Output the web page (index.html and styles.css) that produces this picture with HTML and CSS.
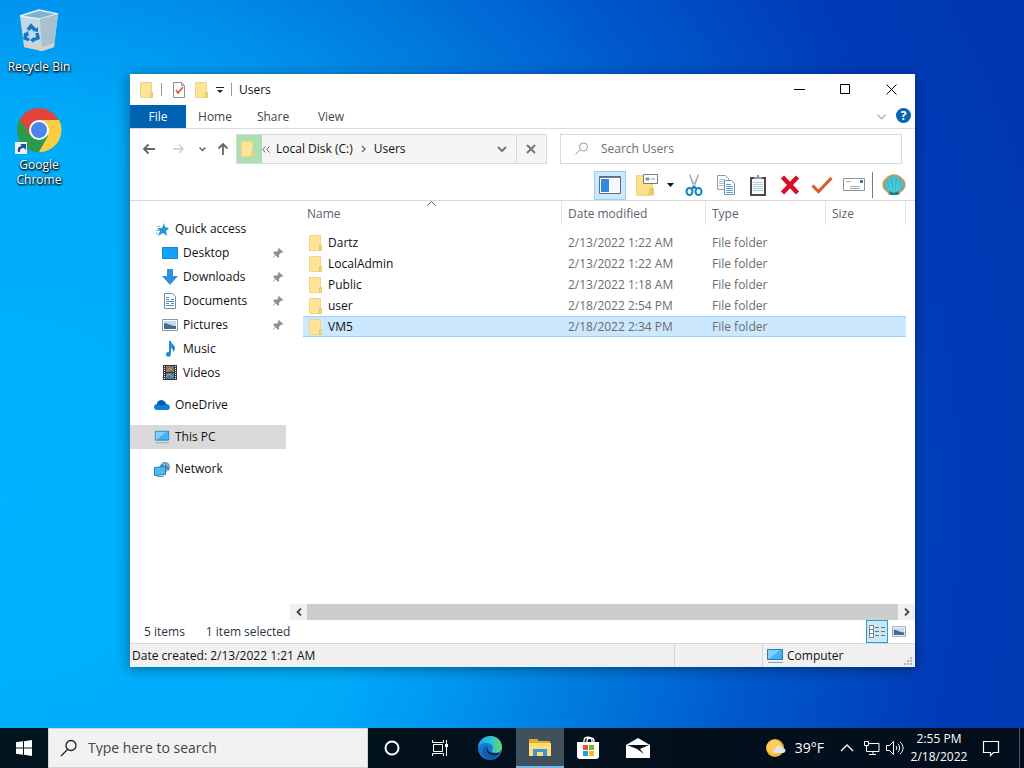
FILE: index.html
```html
<!DOCTYPE html>
<html lang="en">
<head>
  <meta charset="UTF-8">
  <meta name="viewport" content="width=device-width, initial-scale=1">
  <title>Users</title>
  <link rel="stylesheet" href="styles.css">
</head>
<body>
  <!-- Shared icons -->
  <svg class="sprite" aria-hidden="true">
    <symbol id="folder" viewBox="0 0 16 18">
      <path d="M2.500 1.500h11v15h-11z" fill="#fde496" stroke="#f0d582"/>
      <path d="M12.500 11.500h2v5h-2z" fill="#f8dc82" stroke="#e6c667"/>
    </symbol>
    <symbol id="pin" viewBox="0 0 12 12">
      <path d="M7 1l4 4-1 1-1-.3-2 2 .2 2L6 11 3.600 8.300 1 11l-.3-.3L3 7.800 1 5.500l1.200-1 2.300.2 2-2L6 1.800z" fill="#8d9299"/>
    </symbol>
    <symbol id="pc" viewBox="0 0 18 16">
      <path d="M1.500 1.500h15v10h-15z" fill="#41b4f5" stroke="#2b7cab"/>
      <path d="M2 2h12L3 11H2z" fill="#7fd0fb"/>
      <path d="M2 14.500h15" stroke="#8aa0b0"/>
    </symbol>
    <symbol id="picture" viewBox="0 0 16 12">
      <path d="M.5.5h15v11H.5z" fill="#fff" stroke="#8b969e"/>
      <path d="M2 2h12v8H2z" fill="#c3dcf2"/>
      <path d="M2 4c4 0 6 3 12 3v3H2z" fill="#456a8c"/>
    </symbol>
  </svg>

  <main class="desktop">
    <div class="shortcuts">
      <a class="shortcut" href="#recycle">
        <svg width="48" height="48" viewBox="0 0 48 48">
          <path d="M5 8l19-6 19 4-4 33-12 4-18-4z" fill="#c3d9e6"/>
          <path d="M5 8l20 3 18-5-19-4z" fill="#7fb2cf" stroke="#e3eff6" stroke-width="1.500"/>
          <path d="M25 11l18-5-4 33-12 4z" fill="#a9c0ce"/>
          <path d="M9 35l18 4 12-4v4l-12 4-18-4z" fill="#d8cfc9"/>
          <g fill="none" stroke="#1377c9" stroke-width="3.500">
            <path d="M13 22l3-4 4 4M22 25l1 5-5 2M14 32l-4-2 1-5"/>
          </g>
          <path d="M18 23l5 1 0-5zM19 29v6l-4-3zM8 27l5-4 1 5z" fill="#1377c9"/>
        </svg>
        <span>Recycle Bin</span>
      </a>
      <a class="shortcut" href="#chrome">
        <svg width="48" height="48" viewBox="0 0 48 48">
          <circle cx="24" cy="24" r="22" fill="#e0443a"/>
          <path d="M5 13a22 22 0 0 0 20 33l9-16-10-6-10 4z" fill="#2b9a4b"/>
          <path d="M24 14h20A22 22 0 0 1 24 46l9-16z" fill="#fdce45"/>
          <circle cx="24" cy="24" r="10" fill="#fff"/>
          <circle cx="24" cy="24" r="8" fill="#4a86ee"/>
          <path d="M0 36h12v12H0z" fill="#f2f2f2"/>
          <path d="M3 46c-1-4 1-6 4-6l-2-2h6v6l-2-2c-3 0-4 1-4 4z" fill="#24509c"/>
        </svg>
        <span>Google Chrome</span>
      </a>
    </div>

    <section class="window">
      <header class="titlebar">
        <svg width="16" height="18"><use href="#folder"/></svg>
        <span class="divider"></span>
        <button class="quick props" aria-label="Properties">
          <svg width="14" height="16" viewBox="0 0 14 16">
            <path d="M1.500.5h8l3 3v12h-11z" fill="#fff" stroke="#8c9196"/>
            <path d="M9.500.5v3h3" fill="none" stroke="#8c9196"/>
            <path d="M4 8l2 3 5-6" fill="none" stroke="#d9623b" stroke-width="1.800"/>
          </svg>
        </button>
        <button class="quick" aria-label="New folder"><svg width="16" height="18"><use href="#folder"/></svg></button>
        <button class="quick" aria-label="Customize toolbar">
          <svg width="8" height="8" viewBox="0 0 8 8"><path d="M0 1h8v1H0zM1 4h6L4 7z" fill="#222"/></svg>
        </button>
        <span class="divider"></span>
        <h1>Users</h1>
        <div class="controls">
          <button aria-label="Minimize"><svg width="11" height="11"><path d="M0 5.500h11" stroke="#000"/></svg></button>
          <button aria-label="Maximize"><svg width="11" height="11"><path d="M.5.5h9v9h-9z" fill="none" stroke="#000"/></svg></button>
          <button aria-label="Close"><svg width="11" height="11"><path d="M.5.5l10 10M10.500.5l-10 10" stroke="#000"/></svg></button>
        </div>
      </header>

      <nav class="tabs">
        <button class="tab file">File</button>
        <button class="tab">Home</button>
        <button class="tab">Share</button>
        <button class="tab">View</button>
        <button class="expand" aria-label="Expand ribbon">
          <svg width="9" height="6"><path d="M.5.8l4 4 4-4" fill="none" stroke="#b5b5b5" stroke-width="1.500"/></svg>
        </button>
        <button class="help" aria-label="Help">?</button>
      </nav>

      <div class="location">
        <div class="history">
          <button aria-label="Back"><svg width="14" height="12"><path d="M13 6H2M6.500 1.500L2 6l4.500 4.500" fill="none" stroke="#666" stroke-width="1.800"/></svg></button>
          <button aria-label="Forward"><svg width="12" height="12"><path d="M0 6h10M6 2l4 4-4 4" fill="none" stroke="#ccc" stroke-width="1.500"/></svg></button>
          <button class="recent" aria-label="Recent locations"><svg width="7" height="5"><path d="M.5.5l3 3 3-3" fill="none" stroke="#666" stroke-width="1.500"/></svg></button>
          <button class="up" aria-label="Up"><svg width="12" height="14"><path d="M6 13V2M1.500 6.500L6 2l4.500 4.500" fill="none" stroke="#666" stroke-width="1.800"/></svg></button>
        </div>
        <div class="address">
          <span class="progress"><svg width="16" height="18"><use href="#folder"/></svg></span>
          <button class="more" aria-label="Parent folders"><svg width="8" height="7"><path d="M3.500.5l-3 3 3 3M7.500.5l-3 3 3 3" fill="none" stroke="#666"/></svg></button>
          <button class="crumb">Local Disk (C:)</button>
          <svg width="5" height="8"><path d="M1 1l3 3-3 3" fill="none" stroke="#666" stroke-width="1.300"/></svg>
          <button class="crumb">Users</button>
          <button class="drop" aria-label="Previous locations"><svg width="10" height="7"><path d="M1 1l4 4 4-4" fill="none" stroke="#777" stroke-width="2"/></svg></button>
          <button class="stop" aria-label="Stop loading"><svg width="10" height="10"><path d="M1 1l8 8M9 1L1 9" stroke="#777" stroke-width="2"/></svg></button>
        </div>
        <label class="search">
          <svg width="14" height="14"><path d="M.5 12.500l5-5" stroke="#999"/><circle cx="8.500" cy="5" r="4" fill="none" stroke="#999"/></svg>
          <input type="text" placeholder="Search Users" aria-label="Search Users">
        </label>
      </div>

      <div class="toolbar">
        <button class="tool active" aria-label="Navigation pane">
          <svg width="22" height="18" viewBox="0 0 22 18"><path d="M.5.5h21v17H.5z" fill="#fff" stroke="#5c6d7a"/><path d="M1 1h20v1H1z" fill="#71818c"/><path d="M2 3h8v13H2z" fill="#2f89df"/><path d="M11 3h9v13h-9z" fill="#f2f8fd"/></svg>
        </button>
        <button class="tool" aria-label="Folder options">
          <svg width="24" height="22" viewBox="0 0 24 22"><path d="M1.500 1.500h16v20h-16z" fill="#fbe08a" stroke="#f0d582"/><path d="M15 14h4v7h-6z" fill="#f0ca5c"/><path d="M8.500.5h14v9h-14z" fill="#fff" stroke="#77797b"/><path d="M11 4h3v2h-3zM16 5h4" fill="#7891a5" stroke="#8c9195"/></svg>
        </button>
        <button class="arrow" aria-label="More options"><svg width="7" height="4"><path d="M0 0h7L3.500 4z" fill="#111"/></svg></button>
        <button class="tool" aria-label="Cut">
          <svg width="18" height="22" viewBox="0 0 18 22"><path d="M4 1l1-1 6 14-2 1zM14 1l-1-1-6 14 2 1z" fill="#9fabb4"/><g fill="none" stroke="#1583bd" stroke-width="2"><ellipse cx="4.500" cy="17.500" rx="3" ry="3.500"/><ellipse cx="13.500" cy="17.500" rx="3" ry="3.500"/></g><path d="M6 14l3-3 3 3-3 1z" fill="#1583bd"/></svg>
        </button>
        <button class="tool" aria-label="Copy">
          <svg width="20" height="22" viewBox="0 0 20 22"><path d="M1.500 1.500h8l3 3v11h-11z" fill="#fff" stroke="#8b9bab"/><path d="M3 5.500h6M3 7.500h7M3 9.500h7M3 11.500h7" stroke="#9cc2e0"/><path d="M8.500 6.500h7l3 3v11h-10z" fill="#fff" stroke="#7d8fa1"/><path d="M10 10.500h5M10 12.500h7M10 14.500h7M10 16.500h7M10 18.500h7" stroke="#5ba0d6"/></svg>
        </button>
        <button class="tool" aria-label="Paste">
          <svg width="18" height="22" viewBox="0 0 18 22"><path d="M1 3h16v19H1z" fill="#54463d"/><path d="M3 5h12v15H3z" fill="#f7fbfb"/><path d="M4 8.500h10M4 10.500h10M4 12.500h10M4 14.500h10M4 16.500h10" stroke="#b3ccd3"/><path d="M5 5V3h3V1h2v2h3v2z" fill="#91999e"/></svg>
        </button>
        <button class="tool" aria-label="Delete"><svg width="20" height="20"><path d="M2.500 2l15 16M17.500 2l-15 16" stroke="#d90d26" stroke-width="4.500"/></svg></button>
        <button class="tool" aria-label="Properties"><svg width="22" height="18"><path d="M1.500 9.500l6 6L20.500 2" fill="none" stroke="#df5720" stroke-width="3"/></svg></button>
        <button class="tool" aria-label="E-mail"><svg width="22" height="14" viewBox="0 0 22 14"><path d="M.5.5h21v12H.5z" fill="#fff" stroke="#8794a0"/><path d="M3 3.500h5M7 8.500h10M7 10.500h10" stroke="#a4b0ba"/><path d="M17 2h3v3h-3z" fill="#3c78c0"/></svg></button>
        <span class="tool-divider"></span>
        <button class="tool" aria-label="Classic Explorer settings">
          <svg width="24" height="22" viewBox="0 0 24 22"><path d="M5 18C-1 15-1 7 4 4c4-5 12-5 16 0 5 3 5 11-1 14l-2 3H7z" fill="#c49a62"/><path d="M6 17C2 14 2 8 5 6c4-5 10-5 14 0 3 2 4 8-1 11l-3 2H9z" fill="#35bfcd"/><path d="M12 18V3M10 18L7 5M14 18l3-13M8 17L4 9M16 17l4-8" stroke="#5ed3da"/><path d="M7 17l5 2 5-2-1 4H8z" fill="#1a7f88"/></svg>
        </button>
      </div>

      <div class="content">
        <nav class="tree">
          <a href="#quick">
            <svg width="16" height="16" viewBox="0 0 16 16"><path d="M10 2l1 4 4 1-3 3 1 5-4-3-5 3 2-5-3-3h5z" fill="#2b93dc"/><path d="M3 5.500h3M2 9.500h3M2 12.500h2" stroke="#72b8e7"/></svg>
            Quick access
          </a>
          <a class="child" href="#desktop">
            <svg width="16" height="16"><path d="M.5 2.500h15v11H.5z" fill="#11a3f6" stroke="#1685c9"/></svg>
            Desktop <svg class="pin" width="12" height="12"><use href="#pin"/></svg>
          </a>
          <a class="child" href="#downloads">
            <svg width="16" height="16"><path d="M5 0h6v7h5l-8 9-8-9h5z" fill="#348fda"/></svg>
            Downloads <svg class="pin" width="12" height="12"><use href="#pin"/></svg>
          </a>
          <a class="child" href="#documents">
            <svg width="16" height="16"><path d="M2.500.5h8l3 3v12h-11z" fill="#fff" stroke="#7e8e99"/><path d="M4 4.500h3M4 6.500h3M9 6.500h3M4 8.500h8M4 10.500h3M9 10.500h3M4 12.500h8" stroke="#4b91c6"/></svg>
            Documents <svg class="pin" width="12" height="12"><use href="#pin"/></svg>
          </a>
          <a class="child" href="#pictures">
            <svg width="16" height="12"><use href="#picture"/></svg>
            Pictures <svg class="pin" width="12" height="12"><use href="#pin"/></svg>
          </a>
          <a class="child" href="#music">
            <svg width="16" height="16"><path d="M7 0h2c0 3 4 4 4 7 0 2-1 3-2 4 0-3-1-4-2-4v6c0 4-6 3-5 0 0-2 2-2 3-2z" fill="#208cd7"/></svg>
            Music
          </a>
          <a class="child" href="#videos">
            <svg width="16" height="16"><path d="M1 0h14v15H1z" fill="#353539"/><path d="M4 1h8v6H4z" fill="#87775f"/><path d="M4 8h8v6H4z" fill="#3d83a9"/><path d="M5 6l3-3 2 2M4 12l3-3 4 3" stroke="#dda54d" fill="none"/><path d="M2.500 1v14M13.500 1v14" stroke="#fff" stroke-dasharray="1 1"/></svg>
            Videos
          </a>
          <a class="group" href="#onedrive">
            <svg width="16" height="12"><path d="M3 5c1-5 8-5 9 0 5 0 5 6 1 6H3C-1 11-1 5 3 5z" fill="#0d80d5"/><path d="M3 5c1-5 7-5 9 0L8 7z" fill="#0759ad"/></svg>
            OneDrive
          </a>
          <a class="group current" href="#pc">
            <svg width="16" height="16"><use href="#pc"/></svg>
            This PC
          </a>
          <a class="group" href="#network">
            <svg width="16" height="16"><circle cx="11" cy="6" r="5" fill="#528cad"/><path d="M8 2l3 2-1 3 4 3M12 2l3 4" fill="none" stroke="#b4dcec"/><path d="M.5 6.500l11-1v8l-11 1z" fill="#4dbaf3" stroke="#297caf"/><path d="M3 15.500h7" stroke="#7b9bac"/></svg>
            Network
          </a>
        </nav>

        <div class="files">
          <svg class="sort" width="9" height="5"><path d="M.5 4.500l4-4 4 4" fill="none" stroke="#555"/></svg>
          <table>
            <thead>
              <tr><th class="name">Name</th><th class="date">Date modified</th><th class="type">Type</th><th class="size">Size</th></tr>
            </thead>
            <tbody>
              <tr><td><span><svg width="16" height="18"><use href="#folder"/></svg>Dartz</span></td><td>2/13/2022 1:22 AM</td><td>File folder</td><td></td></tr>
              <tr><td><span><svg width="16" height="18"><use href="#folder"/></svg>LocalAdmin</span></td><td>2/13/2022 1:22 AM</td><td>File folder</td><td></td></tr>
              <tr><td><span><svg width="16" height="18"><use href="#folder"/></svg>Public</span></td><td>2/13/2022 1:18 AM</td><td>File folder</td><td></td></tr>
              <tr><td><span><svg width="16" height="18"><use href="#folder"/></svg>user</span></td><td>2/18/2022 2:54 PM</td><td>File folder</td><td></td></tr>
              <tr class="selected"><td><span><svg width="16" height="18"><use href="#folder"/></svg>VM5</span></td><td>2/18/2022 2:34 PM</td><td>File folder</td><td></td></tr>
            </tbody>
          </table>
          <div class="scrollbar">
            <button aria-label="Scroll left"><svg width="6" height="8"><path d="M5 .5L1.500 4 5 7.500" fill="none" stroke="#444" stroke-width="1.800"/></svg></button>
            <span class="thumb"></span>
            <button aria-label="Scroll right"><svg width="6" height="8"><path d="M1 .5L4.500 4 1 7.500" fill="none" stroke="#444" stroke-width="1.800"/></svg></button>
          </div>
        </div>
      </div>

      <div class="summary">
        <span>5 items</span>
        <span>1 item selected</span>
        <div class="views">
          <button class="on" aria-label="Details view"><svg width="16" height="14"><path d="M.5.5h4v12h-4zM.5 4.500h4M.5 8.500h4" fill="#fff" stroke="#75818b"/><path d="M6 2.500h4M12 2.500h4M6 6.500h4M12 6.500h4M6 10.500h4M12 10.500h4" stroke="#687681"/></svg></button>
          <button aria-label="Large icons view"><svg width="14" height="11"><use href="#picture"/></svg></button>
        </div>
      </div>

      <footer class="statusbar">
        <span class="created">Date created: 2/13/2022 1:21 AM</span>
        <span class="blank"></span>
        <span class="zone"><svg width="18" height="16"><use href="#pc"/></svg>Computer</span>
        <svg class="grip" width="10" height="10"><path d="M7 1h2M4 4h2M7 4h2M1 7h2M4 7h2M7 7h2" stroke="#b5b5b5" stroke-width="2"/></svg>
      </footer>
    </section>
  </main>

  <footer class="taskbar">
    <button class="start" aria-label="Start"><svg width="16" height="16"><path d="M0 2.300l7-1v6.200H0zM8 1.200L16 0v7.500H8zM0 8.500h7v6.200l-7-1zM8 8.500h8V16l-8-1.200z" fill="#fff"/></svg></button>
    <label class="task-search">
      <svg width="18" height="18"><circle cx="11" cy="6.500" r="5" fill="none" stroke="#222" stroke-width="1.300"/><path d="M7.500 10.500L1 17" stroke="#222" stroke-width="1.300"/></svg>
      <input type="text" placeholder="Type here to search" aria-label="Type here to search">
    </label>
    <button class="app" aria-label="Cortana"><svg width="16" height="16"><circle cx="8" cy="8" r="6.500" fill="none" stroke="#fff" stroke-width="2"/></svg></button>
    <button class="app" aria-label="Task view"><svg width="18" height="16"><path d="M2.500 4.500h9v7h-9zM1.500 0v2.500h11V0M1.500 16v-2.500h11V16M15.500 0v16" fill="none" stroke="#fff"/><path d="M14 4h3v3h-3z" fill="#fff"/></svg></button>
    <button class="app edge" aria-label="Microsoft Edge">
      <svg width="24" height="24" viewBox="0 0 24 24">
        <defs>
          <linearGradient id="edgeTop" x1="0" x2="1"><stop offset="0" stop-color="#249ce5"/><stop offset=".5" stop-color="#29bfe0"/><stop offset="1" stop-color="#6bd765"/></linearGradient>
        </defs>
        <circle cx="12" cy="12" r="12" fill="#1479d2"/>
        <path d="M0 11C2-3 23-4 24 11c0 5-5 7-9 5-2-1-1-2 0-4 0-3-3-5-7-5-4 0-7 2-8 4z" fill="url(#edgeTop)"/>
        <path d="M9 9c-3 6 1 12 11 10-3 4-7 6-11 4-6-4-6-11 0-14z" fill="#155aa8"/>
        <path d="M10 10c-2 5 3 10 12 6l-2 3C11 21 6 15 10 10z" fill="#08213f"/>
      </svg>
    </button>
    <button class="app running" aria-label="File Explorer"><svg width="22" height="19"><path d="M0 1h8l2 2h11v15H0z" fill="#e9a72d"/><path d="M0 5h22v13H0z" fill="#ffdc76"/><path d="M4 11h14v7h-4v-4H8v4H4z" fill="#359bd8"/></svg></button>
    <button class="app" aria-label="Microsoft Store"><svg width="24" height="24"><path d="M8 7V5c0-5 8-5 8 0v2M11 6V5c0-4 7-4 7 0v2" fill="none" stroke="#fff" stroke-width="1.400"/><path d="M1 6h22v14c0 2-1 3-3 3H4c-2 0-3-1-3-3z" fill="#fff"/><path d="M7 9h5v5H7z" fill="#ee5428"/><path d="M13 9h5v5h-5z" fill="#7db72d"/><path d="M7 15h5v5H7z" fill="#1ba1df"/><path d="M13 15h5v5h-5z" fill="#fab61a"/></svg></button>
    <button class="app edge" aria-label="Mail"><svg width="24" height="20"><path d="M0 7l12-7 12 7v13H0z" fill="#fff"/><path d="M1 7h22l-9 4 4 5-7-5z" fill="#071522"/></svg></button>

    <div class="tray">
      <button class="weather"><svg width="22" height="20"><circle cx="10" cy="10" r="9" fill="#f5b72f"/><circle cx="9" cy="9" r="7" fill="#ffcd59"/><path d="M11 15c-4 0-3-5 0-5 1-4 6-3 6 0 5 0 4 5 1 5z" fill="#dbe6f2"/></svg>39°F</button>
      <button aria-label="Hidden icons"><svg width="14" height="8"><path d="M1 7l6-6 6 6" fill="none" stroke="#fff" stroke-width="1.300"/></svg></button>
      <button aria-label="Network"><svg width="17" height="15"><path d="M5 2.500h11v8H3.500V6M1.500.5h4v4h-4zM3.500 4v3M10 11v3M6 13.500h7" fill="none" stroke="#fff"/></svg></button>
      <button aria-label="Volume"><svg width="18" height="14"><path d="M.5 4.500h3l4-4v13l-4-4h-3zM10 5c1 1 1 3 0 4M12 3c2 2 2 6 0 8M14 1c4 3 4 9 0 12" fill="none" stroke="#fff"/></svg></button>
      <button class="clock"><span>2:55 PM</span><span>2/18/2022</span></button>
      <button class="notice" aria-label="Notifications"><svg width="18" height="17"><path d="M1.500 1.500h15v11h-5l-3 3v-3h-7z" fill="none" stroke="#fff" stroke-width="1.200"/></svg></button>
      <button class="peek" aria-label="Show desktop"></button>
    </div>
  </footer>
</body>
</html>
```

FILE: styles.css
```css
* {
  box-sizing: border-box;
}
body {
  margin: 0;
  height: 100vh;
  display: flex;
  flex-direction: column;
  overflow: hidden;
  font: 12px/16px "Open Sans", "Noto Sans", sans-serif;
  color: #111;
  background: radial-gradient(circle at 0 500px, #00b2ff 0, #00acfa 380px, #0094ee 500px, #007ddf 600px, #0058cc 770px, #003cb8 950px, #0036b0 1150px);
}
button {
  display: flex;
  align-items: center;
  justify-content: center;
  padding: 0;
  border: 0;
  background: none;
  font: inherit;
  color: inherit;
}
input {
  flex: 1;
  min-width: 0;
  padding: 0;
  border: 0;
  outline: 0;
  background: none;
  font: inherit;
}
a {
  color: inherit;
  text-decoration: none;
}
svg {
  flex: none;
  display: block;
}
.sprite {
  position: absolute;
  width: 0;
  height: 0;
}

/* Desktop */
.desktop {
  flex: 1;
  position: relative;
  min-height: 0;
}
.shortcuts {
  display: flex;
  flex-direction: column;
  gap: 32px;
  width: 78px;
  padding-top: 8px;
}
.shortcut {
  display: flex;
  flex-direction: column;
  align-items: center;
  gap: 3px;
  text-align: center;
  line-height: 15px;
  color: #fff;
  text-shadow: 1px 1px 2px #000, 0 1px 2px #000;
}

/* Explorer window */
.window {
  position: absolute;
  top: 74px;
  right: 109px;
  bottom: 61px;
  left: 129px;
  display: flex;
  flex-direction: column;
  background: #fff;
  border-left: 1px solid #1686c5;
  box-shadow: 0 2px 12px rgba(0, 0, 0, 0.4);
}
.titlebar {
  display: flex;
  align-items: center;
  height: 31px;
  padding: 0 1px 0 8px;
  gap: 7px;
}
.divider {
  width: 1px;
  height: 13px;
  background: #999;
}
.props {
  margin-left: 3px;
}
.titlebar h1 {
  margin: 0;
  font-size: 12px;
  font-weight: normal;
}
.controls {
  display: flex;
  align-self: stretch;
  margin-left: auto;
}
.controls button {
  width: 46px;
}
.tabs {
  display: flex;
  height: 24px;
  border-bottom: 1px solid #dadbdc;
  color: #444;
}
.tab {
  width: 58px;
}
.tab.file {
  width: 56px;
  background: #0063b1;
  color: #fff;
}
.expand {
  margin-left: auto;
  width: 24px;
}
.help {
  width: 15px;
  height: 15px;
  margin: 3px 4px 0 3px;
  border-radius: 50%;
  background: #0863b3;
  color: #fff;
  font-weight: bold;
}
.location {
  display: flex;
  height: 41px;
  padding: 5px 13px 6px 0;
}
.history {
  display: flex;
  align-items: center;
  width: 106px;
  padding-left: 4px;
}
.history button {
  width: 30px;
  height: 28px;
}
.history .recent {
  width: 16px;
}
.history .up {
  width: 26px;
}
.address {
  flex: 18;
  display: flex;
  align-items: center;
  margin-right: 13px;
  border: 1px solid #d9d9d9;
  background: #f5f5f5;
}
.progress {
  display: flex;
  align-items: center;
  align-self: stretch;
  width: 25px;
  padding-left: 2px;
  background: #abdfb0;
}
.more {
  width: 8px;
  margin-right: 6px;
}
.crumb {
  margin-right: 8px;
}
.address > svg {
  margin-right: 8px;
}
.drop {
  width: 28px;
  margin-left: auto;
}
.stop {
  align-self: stretch;
  width: 30px;
  border-left: 1px solid #d9d9d9;
}
.search {
  flex: 19;
  display: flex;
  align-items: center;
  gap: 12px;
  padding-left: 14px;
  border: 1px solid #d9d9d9;
}
.search input::placeholder {
  color: #6d6d6d;
}
.toolbar {
  display: flex;
  align-items: center;
  justify-content: flex-end;
  height: 31px;
  padding-right: 5px;
  border-bottom: 1px solid #dadada;
}
.tool {
  width: 32px;
  height: 29px;
}
.tool.active {
  background: #cce8ff;
  border: 1px solid #99d1ef;
  margin-right: 5px;
}
.arrow {
  width: 15px;
}
.tool-divider {
  width: 1px;
  height: 26px;
  margin: 0 5px 0 2px;
  background: #727b82;
}

/* Folder tree */
.content {
  flex: 1;
  display: flex;
  min-height: 0;
}
.tree {
  width: 160px;
  padding-top: 16px;
}
.tree a {
  display: flex;
  align-items: center;
  gap: 5px;
  width: 156px;
  height: 24px;
  padding-left: 24px;
}
.tree .child {
  padding-left: 32px;
}
.tree .group {
  margin-top: 8px;
}
.tree .current {
  background: #d9d9d9;
}
.tree .pin {
  margin: 0 2px 0 auto;
}

/* File list */
.files {
  flex: 1;
  position: relative;
  display: flex;
  flex-direction: column;
  min-width: 0;
}
.sort {
  position: absolute;
  top: 0;
  left: 137px;
}
table {
  width: calc(100% - 22px);
  margin-left: 13px;
  table-layout: fixed;
  border-spacing: 0;
}
th {
  height: 24px;
  padding: 2px 0 0 6px;
  border-right: 1px solid #e5e5e5;
  text-align: left;
  font-weight: normal;
  color: #5a6270;
}
th.name {
  padding-left: 4px;
}
th.date {
  width: 144px;
}
th.type {
  width: 120px;
}
th.size {
  width: 80px;
}
tbody::before {
  content: "";
  display: block;
  height: 7px;
}
td {
  height: 21px;
  padding: 0 0 0 6px;
  border: solid transparent;
  border-width: 1px 0;
  color: #6d6d6d;
}
td:first-child {
  padding-left: 4px;
  color: #111;
}
td span {
  display: flex;
  align-items: center;
  gap: 5px;
  height: 19px;
}
.selected td {
  background: #cce8ff;
  border-color: #99d1ff;
}
.scrollbar {
  display: flex;
  height: 16px;
  margin-top: auto;
  background: #f0f0f0;
}
.scrollbar button {
  width: 17px;
}
.thumb {
  flex: 1;
  background: #cdcdcd;
}

/* Bottom bars */
.summary {
  display: flex;
  align-items: center;
  gap: 21px;
  height: 23px;
  padding: 0 5px 0 14px;
  color: #2b3545;
}
.views {
  display: flex;
  align-self: stretch;
  margin-left: auto;
}
.views button {
  width: 22px;
}
.views .on {
  background: #cce8f6;
  border: 1px solid #26a0da;
}
.statusbar {
  display: flex;
  align-items: center;
  height: 24px;
  border-top: 1px solid #d7d7d7;
  background: #f0f0f0;
}
.created {
  flex: 1;
  padding-left: 2px;
}
.blank {
  width: 88px;
}
.zone {
  display: flex;
  align-items: center;
  gap: 3px;
  width: 141px;
  padding-left: 3px;
}
.blank,
.zone {
  height: 23px;
  border-left: 1px solid #d7d7d7;
}
.grip {
  align-self: flex-end;
  margin-right: 2px;
}

/* Taskbar */
.taskbar {
  display: flex;
  height: 40px;
  background: linear-gradient(90deg, #02141d, #020e1c);
  color: #fff;
}
.start {
  width: 48px;
}
.task-search {
  display: flex;
  align-items: center;
  gap: 10px;
  flex: 0 1 320px;
  padding-left: 11px;
  border: 1px solid #d0d3d5;
  background: #f2f2f2;
  font-size: 14px;
}
.task-search input::placeholder {
  color: #444;
}
.app {
  width: 48px;
}
.edge {
  width: 52px;
}
.running {
  background: #40505c;
  border-bottom: 2px solid #76b9ed;
}
.tray {
  display: flex;
  margin-left: auto;
}
.tray button {
  width: 24px;
}
.tray .weather {
  width: auto;
  gap: 8px;
  margin-right: 11px;
  font-size: 14px;
}
.tray .clock {
  flex-direction: column;
  width: 64px;
  line-height: 18px;
}
.tray .notice {
  width: 40px;
  margin-right: 8px;
}
.tray .peek {
  width: 5px;
  border-left: 1px solid #4d5963;
}
```
